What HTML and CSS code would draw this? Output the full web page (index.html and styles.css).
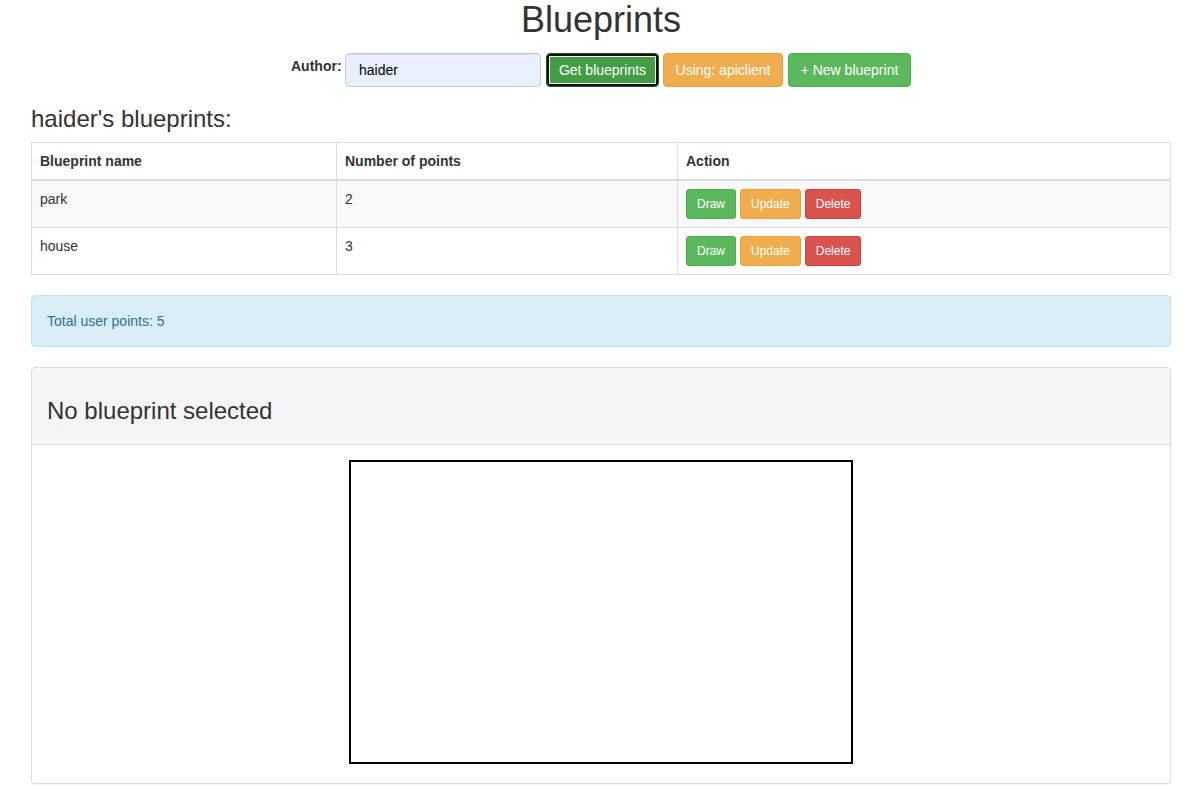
FILE: index.html
```html
<!DOCTYPE html>
<html lang="en">
<head>
<meta charset="utf-8">
<title>Blueprints</title>
<link rel="stylesheet" href="styles.css">
</head>
<body>
<div class="page">
  <h1 class="title">Blueprints</h1>
  <div class="author-row">
    <label class="author-label" for="author">Author:</label>
    <input id="author" class="author-input" type="text" value="haider">
    <button class="btn btn-success btn-focus btn-get">Get blueprints</button>
    <button class="btn btn-warning btn-using">Using: apiclient</button>
    <button class="btn btn-success btn-new">+ New blueprint</button>
  </div>

  <h3 class="section-title">haider's blueprints:</h3>

  <table class="bp-table">
    <thead>
      <tr>
        <th class="col-name">Blueprint name</th>
        <th class="col-points">Number of points</th>
        <th>Action</th>
      </tr>
    </thead>
    <tbody>
      <tr>
        <td>park</td>
        <td>2</td>
        <td>
          <div class="actions">
            <button class="btn btn-sm btn-success">Draw</button>
            <button class="btn btn-sm btn-warning">Update</button>
            <button class="btn btn-sm btn-danger">Delete</button>
          </div>
        </td>
      </tr>
      <tr>
        <td>house</td>
        <td>3</td>
        <td>
          <div class="actions">
            <button class="btn btn-sm btn-success">Draw</button>
            <button class="btn btn-sm btn-warning">Update</button>
            <button class="btn btn-sm btn-danger">Delete</button>
          </div>
        </td>
      </tr>
    </tbody>
  </table>

  <div class="alert-info">Total user points: 5</div>

  <div class="panel">
    <div class="panel-heading">
      <h3 class="panel-title">No blueprint selected</h3>
    </div>
    <div class="panel-body">
      <div class="canvas"></div>
    </div>
  </div>
</div>
</body>
</html>
```

FILE: styles.css
```css
* { box-sizing: border-box; }

html, body {
  margin: 0;
  padding: 0;
  background: #fff;
}

body {
  font-family: "Liberation Sans", Arial, Helvetica, sans-serif;
  font-size: 14px;
  line-height: 1.428571;
  color: #333;
}

.page {
  padding: 0 26px 0 31px;
}

.title {
  margin: 0 0 13px;
  font-size: 36px;
  font-weight: 500;
  line-height: 1.1;
  text-align: center;
  color: #333;
}

.author-row {
  display: flex;
  justify-content: center;
  align-items: center;
  height: 34px;
}

.author-label {
  width: 50px;
  margin-right: 4px;
  font-weight: bold;
  white-space: nowrap;
  position: relative;
  top: -3px;
}

.author-input {
  width: 196px;
  height: 34px;
  margin-right: 5px;
  padding: 6px 13px;
  font-family: inherit;
  font-size: 14px;
  color: #000;
  background: #e8f0fe;
  border: 1px solid #ccc;
  border-radius: 4px;
  box-shadow: inset 0 1px 1px rgba(0,0,0,.075);
  outline: none;
}

.btn {
  display: inline-block;
  height: 34px;
  padding: 6px 12px;
  font-family: inherit;
  font-size: 14px;
  line-height: 20px;
  color: #fff;
  text-align: center;
  border: 1px solid transparent;
  border-radius: 4px;
  white-space: nowrap;
  cursor: pointer;
}

.btn-get { width: 113px; padding: 6px 0; margin-right: 4px; }
.btn-using { width: 120px; padding: 6px 0; margin-right: 5px; }
.btn-new { width: 123px; padding: 6px 0; }

.btn-success { background: #5cb85c; border-color: #4cae4c; }
.btn-warning { background: #f0ad4e; border-color: #eea236; }
.btn-danger  { background: #d9534f; border-color: #d43f3a; }

.btn-focus {
  background: #449d44;
  border-color: #255625;
  box-shadow: inset 0 0 0 2px #111, inset 0 0 0 3px #fff;
}

.btn-sm {
  height: 30px;
  padding: 5px 10px;
  font-size: 12px;
  line-height: 18px;
  border-radius: 3px;
}

.section-title {
  margin: 19px 0 10px;
  font-size: 24px;
  font-weight: 500;
  line-height: 1.1;
}

.bp-table {
  width: 100%;
  border-collapse: collapse;
  border-spacing: 0;
  border: 1px solid #ddd;
  margin-bottom: 20px;
}

.bp-table th,
.bp-table td {
  padding: 8px;
  line-height: 20px;
  text-align: left;
  vertical-align: top;
  border: 1px solid #ddd;
}

.bp-table th {
  font-weight: bold;
  vertical-align: bottom;
  border-bottom: 2px solid #ddd;
}

.col-name { width: 305px; }
.col-points { width: 341px; }

.bp-table tbody tr:nth-child(odd) { background: #f9f9f9; }

.actions {
  display: flex;
  gap: 4px;
}

.alert-info {
  padding: 15px;
  margin-bottom: 20px;
  line-height: 20px;
  color: #31708f;
  background: #d9edf7;
  border: 1px solid #bce8f1;
  border-radius: 4px;
}

.panel {
  margin-bottom: 20px;
  background: #fff;
  border: 1px solid #ddd;
  border-radius: 4px;
  box-shadow: 0 1px 1px rgba(0,0,0,.05);
}

.panel-heading {
  padding: 10px 15px;
  background: #f5f5f5;
  border-bottom: 1px solid #ddd;
  border-radius: 3px 3px 0 0;
}

.panel-title {
  margin: 20px 0 10px;
  font-size: 24px;
  font-weight: 500;
  line-height: 1.1;
  color: #333;
}

.panel-body {
  padding: 15px 15px 19px;
}

.canvas {
  width: 504px;
  height: 304px;
  margin: 0 auto;
  border: 2px solid #000;
  background: #fff;
}
```
